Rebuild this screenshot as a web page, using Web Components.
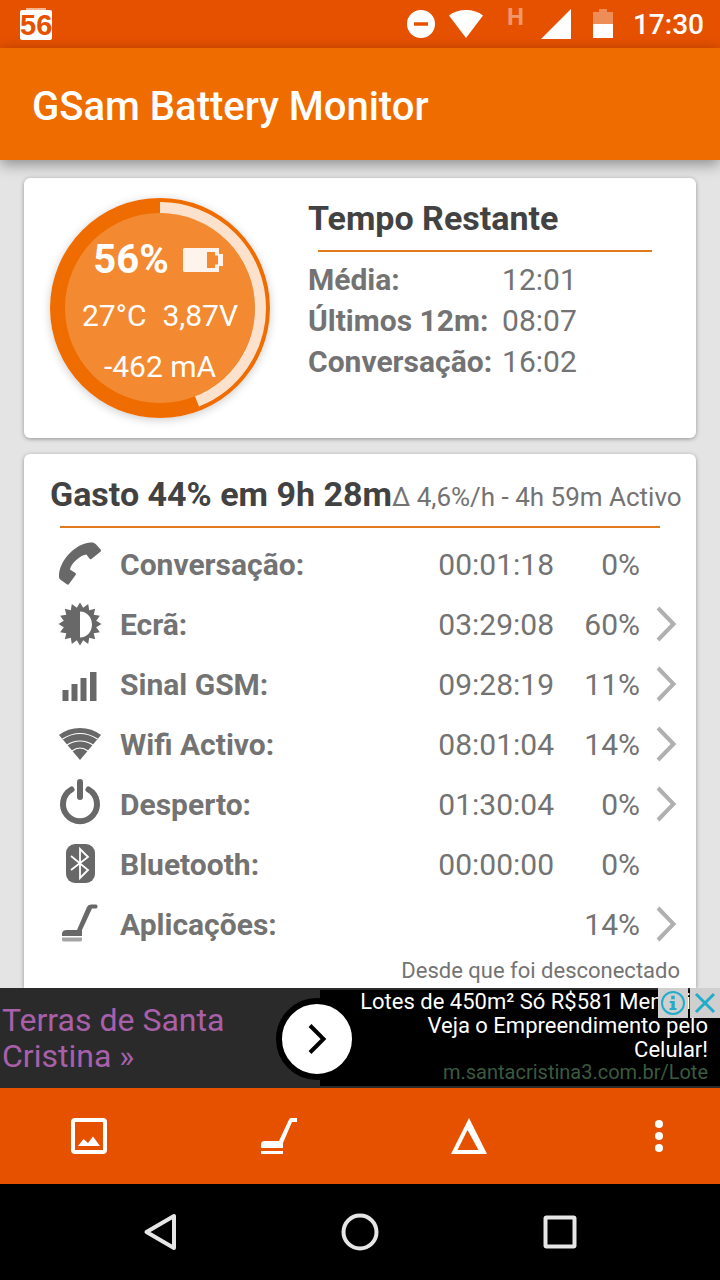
<!DOCTYPE html>
<html lang="pt">
<head>
<meta charset="utf-8">
<meta name="viewport" content="width=device-width, initial-scale=1">
<title>GSam Battery Monitor</title>
<style>
body { margin: 0; font-family: Roboto, "Noto Sans", sans-serif; background: #e4e4e4; }
</style>
</head>
<body>
<battery-app></battery-app>

<script>
const define = (name, html) => {
  const template = document.createElement('template');
  template.innerHTML = html;
  customElements.define(name, class extends HTMLElement {
    constructor() {
      super();
      this.attachShadow({ mode: 'open' }).append(template.content.cloneNode(true));
    }
  });
};

const sun = () => {
  const points = [];
  for (let i = 0; i < 32; i++) {
    const r = i % 2 ? 16.5 : 21.5, a = i * Math.PI / 16;
    points.push((22 + r * Math.sin(a)).toFixed(1) + ',' + (22 - r * Math.cos(a)).toFixed(1));
  }
  return points.join(' ');
};

const ICONS = {
  dnd: [28, 28, `<path fill-rule="evenodd" d="M14 0a14 14 0 1 1 0 28 14 14 0 0 1 0-28zM7 12.200v3.600h14v-3.600z"/>`],
  wifiStatus: [36, 30, `<path d="M1 6.500Q8 1 18 1t17 5.500L18 29z"/>`],
  signal: [30, 30, `<path d="M30 0v30H0z"/>`],
  battery: [20, 30, `<path opacity=".35" d="M6 0h8v3h6v12H0V3h6z"/><path d="M0 15h20v14H0z"/>`],
  charge: [40, 24, `<path opacity=".9" fill-rule="evenodd" d="M1.500 0H36v6h4v12h-4v6H1.500Q0 24 0 22.500v-21Q0 0 1.500 0zM24 4v16h8v-3.500h3v-9h-3V4z"/>`],
  phone: [44, 44, `<path d="M1 33C2 18 17 2 32 .5c3-.3 4.500.3 5.600 1.500l5 5.500c.6.800.5 1.600-.2 2.200l-9 7.200c-.7.500-1.500.4-2-.3l-3-4C23 13 13 21 12 27.500l5.300 3.500c.8.600.9 1.300.3 2l-6.600 9c-.6.800-1.400.9-2.200.3L2.200 37.500C1.200 36.500.9 35 1 33z"/>`],
  screen: [44, 44, `<path fill-rule="evenodd" d="M${sun()}zM22 9.500v26c7 0 12-6 12-13s-5-13-12-13z"/>`],
  gsm: [44, 44, `<path d="M4.500 28h6v11h-6zM13.500 22h6v17h-6zM22.500 16h6v23h-6zM32 10h6.500v29H32z"/>`],
  wifi: [44, 44, `<path d="M1 13Q10 6 22 6t21 7L22 38z"/><path d="M4.500 17Q13 11.500 22 11.500T39.500 17M9 23q6-4 13-4t13 4M14 29q4-3 8-3t8 3" fill="none" stroke="#fff" stroke-width="1.200"/>`],
  power: [44, 44, `<path fill="none" stroke="currentColor" stroke-width="6" stroke-linecap="round" d="M13.500 7.500a17 17 0 1 0 17 0M22 0v15"/>`],
  bluetooth: [44, 44, `<rect x="8" y="2" width="29" height="39" rx="9"/><path fill="none" stroke="#fff" stroke-width="1.800" d="M13 14l17 14-8 8V7l8 8-17 13"/>`],
  vacuum: [44, 44, `<path d="M4 32q0-4 5-4h10L29 5q1-2.500 4-2.500h5q1.500 0 1.500 2T38 6.500h-4L24 28v6H4z"/><path opacity=".6" d="M4 35.500h20V38q0 1.500-2 1.500H6q-2 0-2-1.500z"/>`],
  chevron: [20, 36, `<path fill="none" stroke="currentColor" stroke-width="4" d="M2 2l15.500 16L2 34"/>`],
  picture: [36, 36, `<path fill-rule="evenodd" d="M4 0h28q4 0 4 4v28q0 4-4 4H4q-4 0-4-4V4q0-4 4-4zM4 4v28h28V4z"/><path d="M7 28l5.500-7 4.500 4 5-6.500L29 28z"/>`],
  broom: [36, 36, `<path d="M0 26.500q0-3.500 3.500-3.500H18L28 1.500Q28.700 0 30 0h6v4h-5L22 25v5H0z"/><path d="M0 33h22v3H0z"/>`],
  delta: [36, 36, `<path fill-rule="evenodd" d="M18 0l18 36H0zM16.500 12L6.500 32h21z"/>`],
  more: [8, 32, `<circle cx="4" cy="4" r="4"/><circle cx="4" cy="16" r="4"/><circle cx="4" cy="28" r="4"/>`],
  back: [32, 38, `<path fill="none" stroke="currentColor" stroke-width="4" stroke-linejoin="round" d="M30 3v32L2.500 19z"/>`],
  home: [38, 38, `<circle cx="19" cy="19" r="16.500" fill="none" stroke="currentColor" stroke-width="4"/>`],
  recent: [34, 34, `<rect x="2.500" y="2.500" width="29" height="29" rx="1" fill="none" stroke="currentColor" stroke-width="4"/>`],
  go: [18, 30, `<path fill="none" stroke="currentColor" stroke-width="4" d="M2 1.500L15.500 15 2 28.500"/>`],
  info: [24, 24, `<circle cx="12" cy="12" r="11" fill="none" stroke="currentColor" stroke-width="2"/><path d="M10.200 4.800h3.600v3.400h-3.600zM8.800 10h5v7h1.700v2H8.600v-2h1.800v-5H8.800z"/>`],
  close: [20, 20, `<path fill="none" stroke="currentColor" stroke-width="3" d="M1 1l18 18M19 1L1 19"/>`]
};

customElements.define('app-icon', class extends HTMLElement {
  connectedCallback() {
    if (this.shadowRoot) return;
    const [w, h, body] = ICONS[this.getAttribute('name')];
    this.attachShadow({ mode: 'open' }).innerHTML =
      `<style>:host{display:inline-flex;flex:none}svg{display:block;overflow:visible}</style>
       <svg width="${w}" height="${h}" viewBox="0 0 ${w} ${h}" fill="currentColor" aria-hidden="true">${body}</svg>`;
  }
});

define('status-bar', `
<style>
:host { display: flex; align-items: center; height: 48px; padding: 0 16px 0 20px; background: #e65100; color: #fff; box-sizing: border-box; }
.level { display: grid; place-items: center; width: 32px; height: 30px; margin-top: 2px; border-radius: 2px; background: #fff; color: #e65100;
  font: bold 29px/30px "Liberation Sans", sans-serif; }
.level::before { content: ""; grid-area: 1 / 1; align-self: start; width: 20px; height: 2px; margin-top: -2px; background: #f7b48d; }
.level span { grid-area: 1 / 1; }
.right { margin-left: auto; display: flex; align-items: center; }
.wifi { margin-left: 13px; }
.net { align-self: flex-start; margin: 0 17px 0 23px; font-size: 24px; line-height: 34px; font-weight: 700; color: #f1986a; }
.bat { margin: 0 20px 0 22px; }
time { padding-top: 2px; font-size: 28px; line-height: 46px; font-weight: 500; }
</style>
<span class="level"><span>56</span></span>
<span class="right">
  <app-icon name="dnd"></app-icon>
  <app-icon class="wifi" name="wifiStatus"></app-icon>
  <span class="net">H</span>
  <app-icon name="signal"></app-icon>
  <app-icon class="bat" name="battery"></app-icon>
  <time>17:30</time>
</span>`);

define('title-bar', `
<style>
:host { display: flex; align-items: center; height: 112px; padding: 6px 32px 0; box-sizing: border-box; background: #ef6c00; color: #fff; box-shadow: 0 4px 14px rgba(0,0,0,.4); }
h1 { margin: 0; font-size: 40px; line-height: 48px; font-weight: 500; }
</style>
<h1><slot></slot></h1>`);

define('material-card', `
<style>
:host { display: block; background: #fff; border-radius: 6px; box-shadow: 0 1px 4px rgba(0,0,0,.35); box-sizing: border-box; }
</style>
<slot></slot>`);

define('battery-gauge', `
<style>
:host { display: grid; width: 220px; height: 220px; flex: none; border-radius: 50%; box-shadow: 0 2px 10px rgba(0,0,0,.2); color: #fff; }
svg, .text { grid-area: 1 / 1; }
.text { display: flex; flex-direction: column; align-items: center; padding-top: 36px; font-size: 30px; line-height: 51px; white-space: nowrap; }
p { margin: 0; }
.top { display: flex; align-items: center; gap: 14px; padding-right: 4px; line-height: 52px; }
b { font-size: 40px; }
.mid { display: flex; gap: 16px; padding-top: 4px; }
</style>
<svg viewBox="0 0 220 220" width="220" height="220" aria-hidden="true">
  <circle cx="110" cy="110" r="110" fill="#ef6c00"/>
  <circle cx="110" cy="110" r="95" fill="#f38a32"/>
  <circle cx="110" cy="110" r="100.500" fill="none" stroke="#fce2cc" stroke-width="11" pathLength="100" stroke-dasharray="44 56" transform="rotate(-90 110 110)"/>
</svg>
<div class="text">
  <p class="top"><b>56%</b><app-icon name="charge"></app-icon></p>
  <p class="mid"><span>27°C</span><span>3,87V</span></p>
  <p>-462 mA</p>
</div>`);

define('remaining-panel', `
<style>
:host { display: flex; gap: 38px; padding: 20px 34px 20px 26px; }
section { flex: 1; min-width: 0; }
h2 { margin: 0; font-size: 34px; line-height: 40px; font-weight: 700; color: #424242; }
hr { margin: 12px 10px 7px; height: 2px; border: 0; background: #e17a1c; }
table { border-collapse: collapse; color: #737373; font-size: 30px; line-height: 41px; white-space: nowrap; }
th, td { padding: 0; text-align: left; font-weight: 400; }
th { font-weight: 700; padding-right: 10px; }
</style>
<battery-gauge></battery-gauge>
<section>
  <h2>Tempo Restante</h2>
  <hr>
  <table>
    <tr><th scope="row">Média:</th><td>12:01</td></tr>
    <tr><th scope="row">Últimos 12m:</th><td>08:07</td></tr>
    <tr><th scope="row">Conversação:</th><td>16:02</td></tr>
  </table>
</section>`);

const USAGE = [
  ['phone', 'Conversação:', '00:01:18', '0%', false],
  ['screen', 'Ecrã:', '03:29:08', '60%', true],
  ['gsm', 'Sinal GSM:', '09:28:19', '11%', true],
  ['wifi', 'Wifi Activo:', '08:01:04', '14%', true],
  ['power', 'Desperto:', '01:30:04', '0%', true],
  ['bluetooth', 'Bluetooth:', '00:00:00', '0%', false],
  ['vacuum', 'Aplicações:', '', '14%', true]
];

define('usage-panel', `
<style>
:host { display: block; padding: 20px 16px 0 26px; color: #737373; }
header { display: flex; justify-content: space-between; align-items: baseline; white-space: nowrap; }
h2 { margin: 0; font-size: 34px; line-height: 40px; font-weight: 700; color: #424242; }
header span { font-size: 26px; }
hr { margin: 12px 20px 6px 10px; height: 2px; border: 0; background: #e17a1c; }
table { width: 100%; border-collapse: collapse; font-size: 30px; line-height: 58px; white-space: nowrap; }
th, td { padding: 2px 0 0; text-align: right; vertical-align: middle; }
th { text-align: left; font-weight: 700; padding-left: 10px; }
.icon { width: 60px; padding: 0; color: #686868; }
.icon app-icon { display: flex; justify-content: center; }
.pct { width: 86px; }
.go { width: 40px; padding: 0; }
button { display: flex; justify-content: center; align-items: center; width: 28px; height: 48px; margin-left: auto; padding: 0; border: 0; background: none; color: #b0b0b0; }
p { margin: 0; font-size: 22px; line-height: 34px; text-align: right; }
</style>
<header><h2>Gasto 44% em 9h 28m</h2><span>Δ 4,6%/h - 4h 59m Activo</span></header>
<hr>
<table>${USAGE.map(([icon, label, time, pct, more]) => `
  <tr>
    <td class="icon"><app-icon name="${icon}"></app-icon></td>
    <th scope="row">${label}</th>
    <td>${time}</td>
    <td class="pct">${pct}</td>
    <td class="go">${more ? `<button type="button" aria-label="${label} detalhes"><app-icon name="chevron"></app-icon></button>` : ''}</td>
  </tr>`).join('')}
</table>
<p>Desde que foi desconectado</p>`);

define('ad-banner', `
<style>
:host { display: grid; grid-template-columns: 4fr 5fr; position: relative; height: 100px; padding: 2px 0; box-sizing: border-box; background: #2a2a2a; }
a { text-decoration: none; }
.name { padding: 12px 80px 0 2px; font-size: 32px; line-height: 36px; color: #a860aa; }
.copy { padding-right: 12px; background: #000; color: #fff; font-size: 22px; line-height: 24px; text-align: right; white-space: nowrap; }
.copy span { display: block; }
.copy .url { color: #3b5a40; font-size: 20px; line-height: 20px; }
.arrow { position: absolute; left: calc(400% / 9 - 44px); top: 10px; display: flex; align-items: center; justify-content: center; width: 82px; height: 82px; box-sizing: border-box; padding: 0; border: 6px solid #000; border-radius: 50%; background: #fff; color: #000; }
.tools { position: absolute; top: 0; right: 0; display: flex; gap: 2px; }
.tools button { display: flex; align-items: center; justify-content: center; width: 30px; height: 30px; padding: 0; border: 0; background: #cfcfcf; color: #22acc9; }
</style>
<a class="name" href="#">Terras de Santa Cristina »</a>
<a class="copy" href="#">
  <span>Lotes de 450m² Só R$581 Mensais!</span>
  <span>Veja o Empreendimento pelo</span>
  <span>Celular!</span>
  <span class="url">m.santacristina3.com.br/Lote</span>
</a>
<button class="arrow" type="button" aria-label="Abrir anúncio"><app-icon name="go"></app-icon></button>
<div class="tools">
  <button type="button" aria-label="Informação"><app-icon name="info"></app-icon></button>
  <button type="button" aria-label="Fechar"><app-icon name="close"></app-icon></button>
</div>`);

define('tool-bar', `
<style>
:host { display: flex; justify-content: space-between; align-items: center; height: 96px; padding: 0 36px 0 64px; box-sizing: border-box; background: #e65100; }
button { display: flex; align-items: center; justify-content: center; width: 50px; height: 50px; padding: 0; border: 0; background: none; color: #fff; }
</style>
<button type="button" aria-label="Gráfico"><app-icon name="picture"></app-icon></button>
<button type="button" aria-label="Aplicações"><app-icon name="broom"></app-icon></button>
<button type="button" aria-label="Delta"><app-icon name="delta"></app-icon></button>
<button type="button" aria-label="Mais opções"><app-icon name="more"></app-icon></button>`);

define('nav-bar', `
<style>
:host { display: flex; height: 96px; padding: 0 60px; background: #000; }
button { flex: 1; display: flex; align-items: center; justify-content: center; padding: 0; border: 0; background: none; color: #e6e6e6; }
</style>
<button type="button" aria-label="Voltar"><app-icon name="back"></app-icon></button>
<button type="button" aria-label="Início"><app-icon name="home"></app-icon></button>
<button type="button" aria-label="Recentes"><app-icon name="recent"></app-icon></button>`);

define('battery-app', `
<style>
:host { display: flex; flex-direction: column; min-height: 100vh; background: #e4e4e4; }
title-bar { z-index: 1; }
main { flex: 1; display: flex; flex-direction: column; gap: 16px; padding: 18px 24px 0; }
.usage { flex: 1; border-radius: 6px 6px 0 0; }
ad-banner { z-index: 1; }
</style>
<status-bar></status-bar>
<title-bar>GSam Battery Monitor</title-bar>
<main>
  <material-card><remaining-panel></remaining-panel></material-card>
  <material-card class="usage"><usage-panel></usage-panel></material-card>
</main>
<ad-banner></ad-banner>
<tool-bar></tool-bar>
<nav-bar></nav-bar>`);
</script>
</body>
</html>
